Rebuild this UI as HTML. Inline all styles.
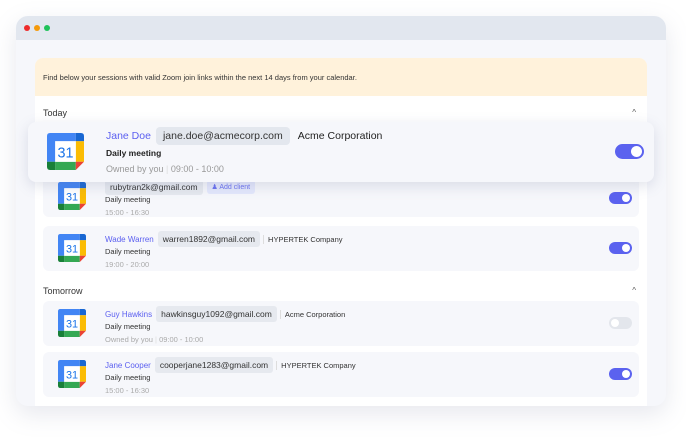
<!DOCTYPE html>
<html><head><meta charset="utf-8"><style>
*{box-sizing:border-box;margin:0;padding:0}
body{width:686px;height:438px;background:#fff;font-family:"Liberation Sans",sans-serif;position:relative;overflow:hidden}
.win{position:absolute;left:16px;top:16px;width:650px;height:390px;border-radius:12px;background:#f6f7fb;overflow:hidden;box-shadow:0 8px 24px rgba(120,130,160,.18)}
.bar{height:24px;background:#e2e7ef;position:relative}
.dot{position:absolute;top:9px;width:6px;height:6px;border-radius:50%}
.panel{position:absolute;left:19px;top:42px;width:612px;height:360px;background:#fff;border-radius:8px 8px 0 0;overflow:hidden}
.banner{height:38px;background:#fff2db;font-size:7.5px;color:#333;padding:15px 8px}
.sec{font-size:9px;color:#333;position:absolute;left:8px}
.car{position:absolute;right:11px;font-size:8px;color:#555}
.row{position:absolute;left:8px;width:596px;height:45px;background:#f6f7fb;border-radius:6px}
.ic{position:absolute}
.l1{position:absolute;left:62px;top:5px;display:flex;align-items:center;font-size:8px;white-space:nowrap}
.nm{color:#5b5ff0;margin-right:4px}
.em{background:#e6e9ef;border-radius:3px;padding:3px 5px;color:#333;font-size:8.5px}
.co{border-left:1px solid #ddd;margin-left:3px;padding-left:4px;color:#333;font-size:7.5px}
.dm{position:absolute;left:62px;top:21px;font-size:7.5px;color:#333}
.tm{position:absolute;left:62px;top:34px;font-size:7.5px;color:#aaa}
.tg{position:absolute;right:7px;top:16px;width:23px;height:12px;border-radius:6px;background:#5b62ef}
.tg::after{content:"";position:absolute;right:2px;top:2px;width:8px;height:8px;border-radius:50%;background:#fff}
.tg.off{background:#e3e6ec}.tg.off::after{right:auto;left:2px}
.pop{position:absolute;left:28px;top:122px;width:626px;height:60px;background:#f6f7fb;border-radius:8px;box-shadow:0 4px 14px rgba(100,110,150,.2)}
</style></head><body>
<svg width="0" height="0" style="position:absolute"><defs><symbol id="cal" viewBox="0 0 36 36">
<path d="M3 0H28V8H8V28H0V3Q0 0 3 0Z" fill="#4285f4"/>
<path d="M28 0H33Q36 0 36 3V8H28Z" fill="#1967d2"/>
<rect x="28" y="8" width="8" height="20" fill="#fbbc04"/>
<rect x="8" y="28" width="20" height="8" fill="#34a853"/>
<path d="M0 28H8V36H3Q0 36 0 33Z" fill="#188038"/>
<path d="M28 28H36L28 36Z" fill="#ea4335"/>
<rect x="8" y="8" width="20" height="20" fill="#fff"/>
<text x="18" y="24" text-anchor="middle" font-family="Liberation Sans,sans-serif" font-size="14" fill="#1a73e8">31</text>
</symbol></defs></svg>
<div class="win">
<div class="bar"><span class="dot" style="left:8px;background:#ee2b2b"></span><span class="dot" style="left:18px;background:#f59a0b"></span><span class="dot" style="left:28px;background:#1fc25a"></span></div>
<div class="panel">
<div class="banner">Find below your sessions with valid Zoom join links within the next 14 days from your calendar.</div>
<div class="sec" style="top:50px">Today</div><div class="car" style="top:50px">^</div>
<div class="row" style="top:114px;height:45px"><svg class="ic" style="left:15px;top:10px" width="28" height="28"><use href="#cal"/></svg>
<div class="l1" style="top:7px"><span class="em">rubytran2k@gmail.com</span><span style="margin-left:4px;background:#e4e8fc;color:#6b72f0;padding:3px 5px;border-radius:3px;font-size:7px">&#9823; Add client</span></div>
<div class="dm" style="top:23px">Daily meeting</div><div class="tm" style="top:36px">15:00 - 16:30</div><div class="tg" style="top:20px"></div></div>
<div class="row" style="top:168px"><svg class="ic" style="left:15px;top:8px" width="28" height="28"><use href="#cal"/></svg>
<div class="l1"><span class="nm">Wade Warren</span><span class="em">warren1892@gmail.com</span><span class="co">HYPERTEK Company</span></div>
<div class="dm">Daily meeting</div><div class="tm">19:00 - 20:00</div><div class="tg"></div></div>
<div class="sec" style="top:228px">Tomorrow</div><div class="car" style="top:228px">^</div>
<div class="row" style="top:243px"><svg class="ic" style="left:15px;top:8px" width="28" height="28"><use href="#cal"/></svg>
<div class="l1"><span class="nm">Guy Hawkins</span><span class="em">hawkinsguy1092@gmail.com</span><span class="co">Acme Corporation</span></div>
<div class="dm">Daily meeting</div><div class="tm">Owned by you <span style="color:#ddd">|</span> 09:00 - 10:00</div><div class="tg off"></div></div>
<div class="row" style="top:294px"><svg class="ic" style="left:15px;top:8px" width="28" height="28"><use href="#cal"/></svg>
<div class="l1"><span class="nm">Jane Cooper</span><span class="em">cooperjane1283@gmail.com</span><span class="co">HYPERTEK Company</span></div>
<div class="dm">Daily meeting</div><div class="tm">15:00 - 16:30</div><div class="tg"></div></div>
</div></div>
<div class="pop"><svg class="ic" style="left:19px;top:11px" width="37" height="37"><use href="#cal"/></svg>
<div style="position:absolute;left:78px;top:5px;display:flex;align-items:center;font-size:10.5px;white-space:nowrap"><span style="color:#5b5ff0;margin-right:5px">Jane Doe</span><span style="background:#e3e7ee;border-radius:4px;padding:3px 7px;color:#333">jane.doe@acmecorp.com</span><span style="margin-left:8px;color:#222">Acme Corporation</span></div>
<div style="position:absolute;left:78px;top:26px;font-size:8.5px;color:#222;font-weight:bold">Daily meeting</div>
<div style="position:absolute;left:78px;top:42px;font-size:9px;color:#999">Owned by you <span style="color:#ddd">|</span> 09:00 - 10:00</div>
<div class="tg" style="right:10px;top:22px;width:29px;height:15px;border-radius:8px"></div>
</div>
<style>.pop .tg::after{width:11px;height:11px;top:2px}</style>
</body></html>
